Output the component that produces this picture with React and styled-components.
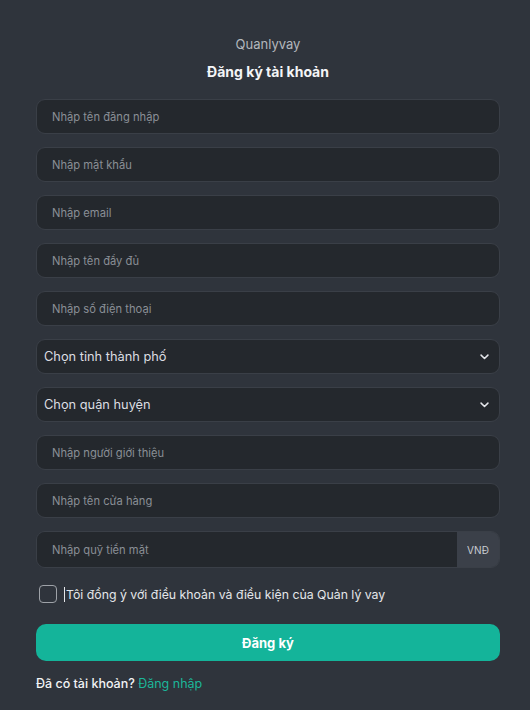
import styled, { createGlobalStyle } from "styled-components";

const GlobalStyle = createGlobalStyle`
    html, body {
        margin: 0;
        background: #2f343c;
        font-family: Inter, "Open Sans", "Noto Sans", sans-serif;
    }
`;

const textFields = [
    "Nhập tên đăng nhập",
    "Nhập mật khẩu",
    "Nhập email",
    "Nhập tên đầy đủ",
    "Nhập số điện thoại",
];

const moreFields = ["Nhập người giới thiệu", "Nhập tên cửa hàng"];

function Chevron() {
    return (
        <svg width="11" height="11" viewBox="0 0 16 16" fill="none">
            <path d="M3 6l5 5 5-5" stroke="#e4e6ea" strokeWidth="2.2" strokeLinecap="round" strokeLinejoin="round" />
        </svg>
    );
}

export default function App() {
    return (
        <>
            <GlobalStyle />
            <Page>
                <Brand>Quanlyvay</Brand>
                <Title>Đăng ký tài khoản</Title>
                <Form onSubmit={e => e.preventDefault()}>
                    {textFields.map(p => (
                        <Input key={p} placeholder={p} type={p === "Nhập mật khẩu" ? "password" : "text"} />
                    ))}
                    <SelectBox>
                        <span>Chọn tỉnh thành phố</span>
                        <Chevron />
                    </SelectBox>
                    <SelectBox>
                        <span>Chọn quận huyện</span>
                        <Chevron />
                    </SelectBox>
                    {moreFields.map(p => (
                        <Input key={p} placeholder={p} />
                    ))}
                    <Group>
                        <GroupInput placeholder="Nhập quỹ tiền mặt" />
                        <Addon>VNĐ</Addon>
                    </Group>
                    <Agree>
                        <Check />
                        <AgreeText>Tôi đồng ý với điều khoản và điều kiện của Quản lý vay</AgreeText>
                    </Agree>
                    <Submit type="submit">Đăng ký</Submit>
                    <Footer>
                        Đã có tài khoản? <a href="#">Đăng nhập</a>
                    </Footer>
                </Form>
            </Page>
        </>
    );
}

const Page = styled.div`
    width: 530px;
    min-height: 710px;
    box-sizing: border-box;
    padding: 36px 30px 0 36px;
    display: flex;
    flex-direction: column;
    align-items: center;
`;

const Brand = styled.div`
    font-size: 13px;
    color: #b3b7bd;
    line-height: 16px;
`;

const Title = styled.h1`
    margin: 11px 0 18px;
    font-size: 14px;
    font-weight: 700;
    line-height: 18px;
    color: #f4f5f7;
`;

const Form = styled.form`
    width: 464px;
    display: flex;
    flex-direction: column;
    gap: 13px;
`;

const Input = styled.input`
    height: 35px;
    box-sizing: border-box;
    padding: 0 15px;
    border: 1px solid #3a3f47;
    border-radius: 9px;
    background: #24282d;
    color: #e6e7ea;
    font-family: inherit;
    font-size: 11.2px;
    outline: none;
    &::placeholder {
        color: #8a8f96;
    }
`;

const SelectBox = styled.div`
    height: 35px;
    box-sizing: border-box;
    padding: 0 9px 0 7px;
    border: 1px solid #3a3f47;
    border-radius: 9px;
    background: #24282d;
    color: #dcdee2;
    font-size: 12.8px;
    display: flex;
    align-items: center;
    justify-content: space-between;
`;

const Group = styled.div`
    height: 35px;
    display: flex;
    border: 1px solid #3a3f47;
    border-radius: 9px;
    overflow: hidden;
`;

const GroupInput = styled(Input)`
    flex: 1;
    height: 100%;
    border: none;
    border-radius: 0;
`;

const Addon = styled.div`
    width: 42px;
    display: flex;
    align-items: center;
    justify-content: center;
    background: #3b4049;
    color: #c9ccd1;
    font-size: 10px;
`;

const Agree = styled.label`
    display: flex;
    align-items: center;
    gap: 7px;
    padding: 4px 0 8px 3px;
`;

const Check = styled.input.attrs({ type: "checkbox" })`
    appearance: none;
    margin: 0;
    width: 18px;
    height: 18px;
    border: 1px solid #9ea2a8;
    border-radius: 4px;
    background: transparent;
`;

const AgreeText = styled.span`
    font-size: 12.3px;
    color: #e4e6e9;
    border-left: 1px solid #e4e6e9;
    padding-left: 1px;
`;

const Submit = styled.button`
    height: 37px;
    border: none;
    border-radius: 10px;
    background: #14b49a;
    color: #ffffff;
    font-family: inherit;
    font-size: 13px;
    font-weight: 700;
`;

const Footer = styled.div`
    margin-top: 2px;
    font-size: 12.5px;
    font-weight: 500;
    color: #f2f3f5;
    & a {
        color: #1bb79a;
        text-decoration: none;
        font-weight: 400;
    }
`;
